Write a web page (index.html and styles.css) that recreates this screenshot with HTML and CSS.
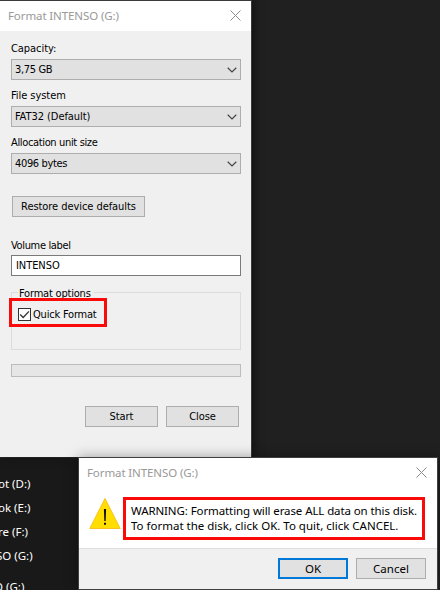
FILE: index.html
```html
<!DOCTYPE html>
<html lang="en">
<head>
<meta charset="utf-8">
<title>Format INTENSO (G:)</title>
<link rel="stylesheet" href="styles.css">
</head>
<body>
<div class="desktop">
  <div class="drives">
    <div>ot (D:)</div>
    <div>ok (E:)</div>
    <div>re (F:)</div>
    <div class="cut">SO (G:)</div>
    <div class="last">O (G:)</div>
  </div>

  <section class="window format">
    <header class="titlebar">
      <span class="caption">Format INTENSO (G:)</span>
      <svg class="close" width="11" height="11" viewBox="0 0 11 11"><path d="M.5.5l10 10M10.5.5l-10 10"/></svg>
    </header>
    <div class="form">
      <label class="label">Capacity:</label>
      <div class="combo tight"><span>3,75 GB</span><svg width="10" height="6" viewBox="0 0 10 6"><path d="M.7.7L5 4.9 9.3.7"/></svg></div>
      <label class="label">File system</label>
      <div class="combo"><span>FAT32 (Default)</span><svg width="10" height="6" viewBox="0 0 10 6"><path d="M.7.7L5 4.9 9.3.7"/></svg></div>
      <label class="label tight">Allocation unit size</label>
      <div class="combo tight"><span>4096 bytes</span><svg width="10" height="6" viewBox="0 0 10 6"><path d="M.7.7L5 4.9 9.3.7"/></svg></div>
      <div class="button restore">Restore device defaults</div>
      <label class="label volume tight">Volume label</label>
      <div class="input">INTENSO</div>
      <div class="group">
        <span class="legend">Format options</span>
        <div class="check"><svg width="13" height="13" viewBox="0 0 13 13"><rect x=".5" y=".5" width="12" height="12"/><path d="M2.2 6.5l3 3L11 3.4"/></svg><span>Quick Format</span></div>
        <i class="marker quick"></i>
      </div>
      <div class="progress"></div>
      <div class="actions">
        <div class="button">Start</div>
        <div class="button">Close</div>
      </div>
    </div>
  </section>

  <section class="window confirm">
    <header class="titlebar">
      <span class="caption">Format INTENSO (G:)</span>
      <svg class="close" width="11" height="11" viewBox="0 0 11 11"><path d="M.5.5l10 10M10.5.5l-10 10"/></svg>
    </header>
    <div class="message">
      <svg class="warn" width="32" height="33" viewBox="0 0 32 33"><path class="tri" d="M16 1.5L31.2 31.5H.8z"/><path class="bang" d="M14.9 12h2.2l-.4 12h-1.4zM15 25.8h2v2h-2z"/></svg>
      <div class="marker text">
        <div class="line1">WARNING: Formatting will erase ALL data on this disk.</div>
        <div class="line2">To format the disk, click OK. To quit, click CANCEL.</div>
      </div>
    </div>
    <footer class="footer">
      <div class="button primary">OK</div>
      <div class="button">Cancel</div>
    </footer>
  </section>
</div>
</body>
</html>
```
FILE: styles.css
```css
* { box-sizing: border-box; }
body { margin: 0; }
svg { display: block; flex: none; fill: none; }

.desktop {
  position: relative;
  width: 440px;
  height: 590px;
  overflow: hidden;
  background: #202020;
  font: 11.5px/15px "Noto Sans", sans-serif;
  color: #000;
  white-space: nowrap;
}

.drives {
  position: absolute;
  left: 0;
  top: 457px;
  width: 79px;
  height: 133px;
  padding-top: 14px;
  border-top: 1px solid #2e2e2e;
  background: #191919;
  color: #fff;
  line-height: 24px;
}
.drives div { margin-left: -2px; }
.drives .cut { margin-left: -4px; }
.drives .last { margin: 7px 0 0 -6px; }

.window { position: absolute; background: #f0f0f0; }
.format {
  left: 0;
  top: 0;
  width: 252px;
  height: 457px;
  border-top: 1px solid #3a3a3a;
  border-right: 1px solid #3a3a3a;
  box-shadow: 2px 0 8px #111;
  overflow: hidden;
}
.confirm {
  left: 78px;
  top: 457px;
  width: 360px;
  height: 133px;
  border: 1px solid #3f3f3f;
  box-shadow: 0 0 12px rgba(0, 0, 0, .35);
}

.titlebar {
  display: flex;
  justify-content: space-between;
  height: 30px;
  padding: 9px 10px 0 8px;
  background: #fff;
  color: #999;
}
.caption { line-height: 12px; letter-spacing: -.1px; }
.close { stroke: #8b8b8b; }

.form {
  display: flex;
  flex-direction: column;
  padding: 10px 10px 0 11px;
  font: 11px/16px "DejaVu Sans Condensed", "DejaVu Sans", sans-serif;
  letter-spacing: -.06px;
}
.tight { letter-spacing: -.35px; }
.label { height: 18px; }
.combo {
  display: flex;
  justify-content: space-between;
  align-items: center;
  height: 21px;
  margin-bottom: 8px;
  padding: 0 3px;
  border: 1px solid #adadad;
  background: #e1e1e1;
}
.combo span { padding-top: 1px; }
.combo svg { stroke: #444; stroke-width: 1.2; }

.button {
  width: 73px;
  height: 21px;
  border: 1px solid #adadad;
  background: #e1e1e1;
  text-align: center;
  line-height: 20px;
}
.restore { width: 133px; margin: 14px 0 0 1px; }
.volume { margin-top: 20px; line-height: 18px; }
.input {
  height: 21px;
  padding-left: 4px;
  border: 1px solid #7a7a7a;
  background: #fff;
  line-height: 19px;
}
.group {
  position: relative;
  height: 58px;
  margin-top: 16px;
  border: 1px solid #dcdcdc;
}
.legend {
  display: block;
  width: 76px;
  height: 14px;
  margin: -7px 0 0 6px;
  padding-left: 1px;
  background: #f0f0f0;
  letter-spacing: -.2px;
}
.check {
  display: flex;
  gap: 2px;
  margin: 8px 0 0 6px;
  line-height: 14px;
  letter-spacing: -.2px;
}
.check rect { fill: #fff; stroke: #333; }
.check path { stroke: #333; stroke-width: 1.3; }
.marker { border: 3px solid #fb0a0a; }
.quick { position: absolute; left: -3px; top: 5px; width: 98px; height: 29px; }
.progress { height: 13px; margin-top: 14px; border: 1px solid #bcbcbc; background: #e6e6e6; }
.actions { display: flex; gap: 8px; margin: 29px 0 0 74px; }

.confirm .titlebar { padding-right: 10px; }
.message {
  display: flex;
  height: 60px;
  padding: 9px 0 0 10px;
  background: #fff;
}
.tri { fill: #ffde00; stroke: #fcc21b; }
.bang { fill: #111; }
.text { width: 302px; height: 43px; margin-left: 2px; padding: 3px 0 0 5px; }
.line1 { letter-spacing: -.1px; }
.footer {
  display: flex;
  justify-content: flex-end;
  gap: 8px;
  height: 41px;
  padding: 9px 11px 0 0;
  border-top: 1px solid #dfdfdf;
  background: #f0f0f0;
}
.footer .button { width: 70px; }
.footer .primary { border: 2px solid #0078d7; line-height: 18px; }
```
